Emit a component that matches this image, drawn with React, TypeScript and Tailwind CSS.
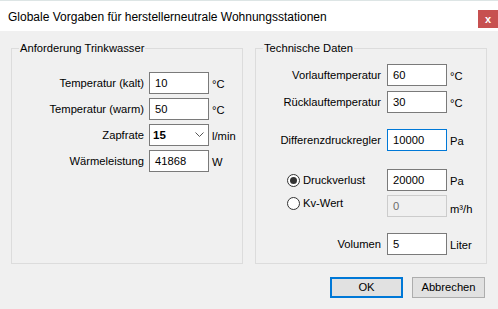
const font = { fontFamily: '"Liberation Sans", Arial, sans-serif' };

function TextBox({ value, focused, disabled }: { value: string; focused?: boolean; disabled?: boolean }) {
  const border = focused ? 'border-[#0078d7]' : disabled ? 'border-[#cccccc]' : 'border-[#7a7a7a]';
  const bg = disabled ? 'bg-[#f0f0f0] text-[#6d6d6d]' : 'bg-white text-black';
  return (
    <div className={`w-[60px] h-[22px] border ${border} ${bg} flex items-center px-[5px] shrink-0`}>
      {value}
    </div>
  );
}

function Row({ label, labelWidth, children, unit, className = '' }: {
  label: React.ReactNode;
  labelWidth: string;
  children: React.ReactNode;
  unit?: string;
  className?: string;
}) {
  return (
    <div className={`flex items-center h-[22px] ${className}`}>
      <div className={`${labelWidth} flex justify-end shrink-0`}>{label}</div>
      {children}
      {unit && <span className="ml-[3px] mt-[2px]">{unit}</span>}
    </div>
  );
}

function Radio({ checked, label }: { checked?: boolean; label: string }) {
  return (
    <div className="flex items-center gap-[3px]">
      <span className="w-[13px] h-[13px] rounded-full border border-[#333] bg-white flex items-center justify-center">
        {checked && <span className="w-[7px] h-[7px] rounded-full bg-[#333]" />}
      </span>
      <span>{label}</span>
    </div>
  );
}

export default function App() {
  return (
    <div className="w-[498px] h-[309px] bg-[#f0f0f0] flex flex-col text-[11.2px] leading-[15px] text-black overflow-hidden" style={font}>
      {/* title bar */}
      <div className="h-[31px] bg-white border-t border-[#dde5e5] flex items-start justify-between shrink-0">
        <span className="pl-[8px] pt-[9px] text-[12px]">Globale Vorgaben für herstellerneutrale Wohnungsstationen</span>
        <div className="mt-[9px] w-[20px] h-[18px] bg-[#c75050] text-white flex items-center justify-center text-[11px] font-bold">
          x
        </div>
      </div>

      <div className="flex gap-[12px] px-[11px] mt-[10px]">
        <fieldset className="w-[233px] h-[223px] border border-[#dcdcdc] flex flex-col">
          <legend className="ml-[7px] px-[1px] leading-[15px]">Anforderung Trinkwasser</legend>
          <div className="flex flex-col gap-[4px] mt-[16px]">
            <Row label="Temperatur (kalt)" labelWidth="w-[132px]" unit="°C">
              <div className="ml-[5px]"><TextBox value="10" /></div>
            </Row>
            <Row label="Temperatur (warm)" labelWidth="w-[132px]" unit="°C">
              <div className="ml-[5px]"><TextBox value="50" /></div>
            </Row>
            <Row label="Zapfrate" labelWidth="w-[132px]" unit="l/min">
              <div className="ml-[5px] w-[60px] h-[22px] border border-[#7a7a7a] bg-white flex items-center justify-between pl-[3px] pr-[4px]">
                <span className="font-bold text-[11.5px]">15</span>
                <svg width="9" height="6" viewBox="0 0 9 6" fill="none" stroke="#555" strokeWidth="1">
                  <path d="M0.5 0.5 L4.5 4.5 L8.5 0.5" />
                </svg>
              </div>
            </Row>
            <Row label="Wärmeleistung" labelWidth="w-[132px]" unit="W">
              <div className="ml-[5px]"><TextBox value="41868" /></div>
            </Row>
          </div>
        </fieldset>

        <fieldset className="w-[233px] h-[223px] border border-[#dcdcdc] flex flex-col">
          <legend className="ml-[7px] px-[1px] leading-[15px]">Technische Daten</legend>
          <div className="flex flex-col mt-[8px]">
            <Row label="Vorlauftemperatur" labelWidth="w-[125px]" unit="°C">
              <div className="ml-[6px]"><TextBox value="60" /></div>
            </Row>
            <Row label="Rücklauftemperatur" labelWidth="w-[125px]" unit="°C" className="mt-[5px]">
              <div className="ml-[6px]"><TextBox value="30" /></div>
            </Row>
            <Row label="Differenzdruckregler" labelWidth="w-[125px]" unit="Pa" className="mt-[16px]">
              <div className="ml-[6px]"><TextBox value="10000" focused /></div>
            </Row>
            <div className="flex items-center h-[22px] mt-[18px]">
              <div className="w-[125px] pl-[31px] shrink-0"><Radio checked label="Druckverlust" /></div>
              <div className="ml-[6px]"><TextBox value="20000" /></div>
              <span className="ml-[3px] mt-[2px]">Pa</span>
            </div>
            <div className="flex items-center h-[22px] mt-[4px]">
              <div className="w-[125px] pl-[31px] shrink-0 self-start mt-[1px]"><Radio label="Kv-Wert" /></div>
              <div className="ml-[6px]"><TextBox value="0" disabled /></div>
              <span className="ml-[3px] mt-[6px]">m³/h</span>
            </div>
            <Row label="Volumen" labelWidth="w-[125px]" unit="Liter" className="mt-[16px]">
              <div className="ml-[6px]"><TextBox value="5" /></div>
            </Row>
          </div>
        </fieldset>
      </div>

      <div className="flex justify-end gap-[9px] pr-[13px] mt-[13px]">
        <button className="w-[73px] h-[21px] bg-[#e1e1e1] border-2 border-[#0078d7] flex items-center justify-center">OK</button>
        <button className="w-[73px] h-[21px] bg-[#e1e1e1] border border-[#adadad] flex items-center justify-center">Abbrechen</button>
      </div>
    </div>
  );
}
